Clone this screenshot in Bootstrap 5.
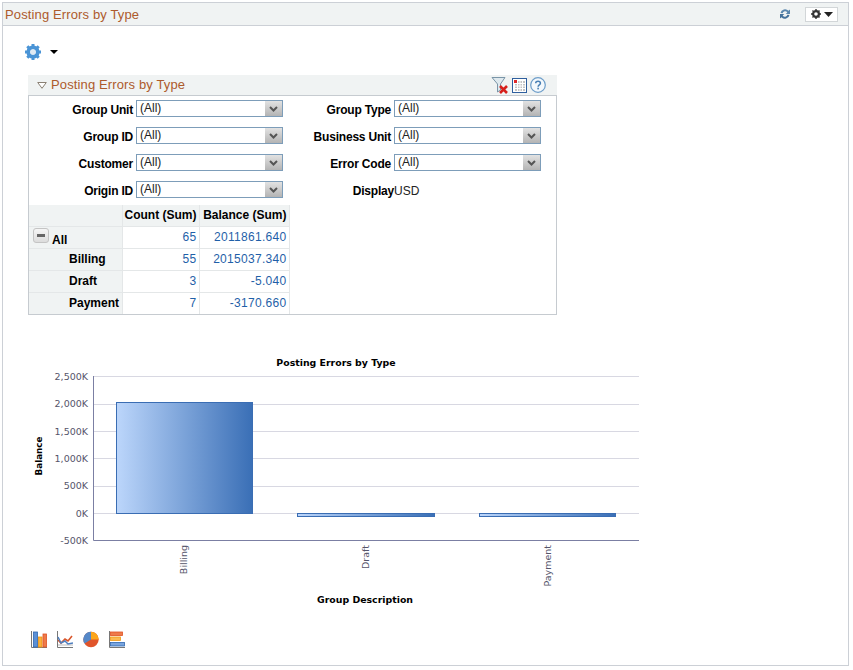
<!DOCTYPE html>
<html lang="en">
<head>
<meta charset="utf-8">
<title>Posting Errors by Type</title>
<link href="https://cdn.jsdelivr.net/npm/bootstrap@5.3.0/dist/css/bootstrap.min.css" rel="stylesheet">
<style>
html,body{background:#fff;margin:0;font-family:"Liberation Sans",Arial,sans-serif;font-size:12px;color:#000}
.portlet{margin:2px 4px 0 2px;height:664px;border:1px solid #ccd0d6;overflow:hidden}
.portlet-head{height:23px;background:#f0f3f3;border-bottom:1px solid #ccd0d6;padding:0 10px 0 2px}
.brown-title{color:#ad5a2c;font-size:13px;letter-spacing:.13px;line-height:1}
.tool-btn{width:33px;height:15px;background:#fff;border:1px solid #d2d6d8;margin-left:14px}
.gear-row{height:26px;padding:13px 0 0 22px;box-sizing:content-box}
.caret-down{width:0;height:0;border-left:4px solid transparent;border-right:4px solid transparent;border-top:4px solid #000;margin-left:9px}
.filter-panel{margin:10px 0 0 25px;width:529px}
.filter-head{height:20px;background:#f0f3f3;padding:0 11px 0 9px}
.filter-head .brown-title{margin-left:1px;margin-bottom:2px}
.filter-body{border:1px solid #c6cbd0;height:220px}
.filter-grid{display:grid;grid-template-columns:104px 147px 105px 147px;column-gap:3px;row-gap:10px;padding-top:4px;align-items:center}
.filter-grid label{font-weight:700;text-align:right;line-height:17px;font-size:12px;letter-spacing:-.2px;padding-top:2px;margin-bottom:-2px}
.filter-grid label.snug{margin-right:-3px}
.pick{appearance:none;-webkit-appearance:none;display:block;width:147px;height:17px;padding:0 0 0 3px;border:1px solid #7d9db9;border-radius:0;background-color:#fff;background-image:url("data:image/svg+xml,%3Csvg xmlns='http://www.w3.org/2000/svg' width='17' height='15'%3E%3Cdefs%3E%3ClinearGradient id='g' x1='0' y1='0' x2='0' y2='1'%3E%3Cstop offset='0' stop-color='%23e2e2e2'/%3E%3Cstop offset='1' stop-color='%23b4b4b4'/%3E%3C/linearGradient%3E%3C/defs%3E%3Crect width='17' height='15' fill='url(%23g)'/%3E%3Cpath d='M5 6l3.500 3.500L12 6' fill='none' stroke='%23555' stroke-width='2'/%3E%3C/svg%3E");background-repeat:no-repeat;background-position:right center;font:12px/15px "Liberation Sans",Arial,sans-serif;color:#222}
.plain-val{line-height:17px;color:#222;padding-top:2px;margin-bottom:-2px}
.pivot{border-collapse:collapse;margin-top:7px;width:260px;table-layout:fixed;font-size:12px}
.pivot th,.pivot td{padding:0 2px;border:1px solid #e4e7e8;height:22px;line-height:14px}
.pivot tr:first-child th{border-top:0;height:21px}
.pivot th:first-child{border-left:0}
.pivot tr:last-child th,.pivot tr:last-child td{border-bottom:0}
.pivot th{background:#f0f3f3;font-weight:700;color:#000}
.pivot th.hc{text-align:right;padding-right:2px;white-space:nowrap}
.pivot th.rowh{padding-left:40px}
.pivot td{text-align:right;color:#1f5fa8;letter-spacing:.3px}
.pivot th.allh{padding-left:4px}
.minus-btn{display:inline-block;width:16px;height:15px;background:linear-gradient(#f6f6f6,#dcdcdc);border:1px solid #c4c4c4;border-radius:3px;vertical-align:1px;margin-right:3px;padding:5px 3px 0}
.minus-btn span{display:block;height:3px;background:#666}
.chart-svg{display:block;margin-top:35px;margin-left:17px}
.chart-svg text{font-family:"DejaVu Sans",sans-serif}
.ticks{font-size:9.500px;fill:#55556a}
.chart-types{padding-left:28px;margin-top:21px;gap:10px}
</style>
</head>
<body>
<div class="portlet">
  <div class="portlet-head d-flex align-items-center justify-content-between">
    <span class="brown-title">Posting Errors by Type</span>
    <div class="d-flex align-items-center">
      <svg width="12" height="12" viewBox="0 0 12 12"><path d="M1.500 5A4.600 4.600 0 0 1 9.500 2.800L11 1.500V6H6.700L8.300 4.500A2.600 2.600 0 0 0 3.600 5.300Z" fill="#5a86ad"/><path d="M10.500 7A4.600 4.600 0 0 1 2.500 9.200L1 10.500V6H5.300L3.700 7.500A2.600 2.600 0 0 0 8.400 6.700Z" fill="#44719b"/></svg>
      <div class="tool-btn d-flex align-items-center justify-content-center gap-1">
        <svg width="10" height="10" viewBox="0 0 10 10"><circle cx="5" cy="5" r="2.900" fill="none" stroke="#333" stroke-width="2.200"/><path d="M5 0v2M5 8v2M0 5h2M8 5h2M1.500 1.500l1.400 1.400M7.100 7.100l1.400 1.400M8.500 1.500L7.100 2.900M2.900 7.100L1.500 8.500" stroke="#333" stroke-width="1.400"/></svg>
        <svg width="9" height="5" viewBox="0 0 9 5"><path d="M0 0h9L4.500 5Z" fill="#222"/></svg>
      </div>
    </div>
  </div>

  <div class="gear-row d-flex align-items-center">
    <svg width="16" height="16" viewBox="0 0 16 16"><circle cx="8" cy="8" r="4.700" fill="none" stroke="#4a94d6" stroke-width="3.800"/><path d="M8 0v3M8 13v3M0 8h3M13 8h3M2.300 2.300l2.200 2.200M11.500 11.500l2.200 2.200M13.700 2.300l-2.200 2.200M4.500 11.500l-2.200 2.200" stroke="#4a94d6" stroke-width="3"/><circle cx="8" cy="8" r="2.600" fill="#dfeaf4"/></svg>
    <span class="caret-down"></span>
  </div>

  <div class="filter-panel">
    <div class="filter-head d-flex align-items-center">
      <svg width="10" height="7" viewBox="0 0 10 7" class="me-1"><path d="M.7.500h8.600L5 6.300Z" fill="#fff" stroke="#8a8074"/></svg>
      <span class="brown-title flex-grow-1">Posting Errors by Type</span>
      <svg width="18" height="18" viewBox="0 0 18 18"><path d="M1 1.500h13L9.500 8v6L6.500 16V8Z" fill="#dfe9ee" stroke="#7a95a8"/><path d="M9 10l7 7M16 10l-7 7" stroke="#d6201c" stroke-width="2.600"/></svg>
      <svg width="15" height="15" viewBox="0 0 15 15" class="ms-1"><rect x=".5" y=".5" width="14" height="14" fill="#fff" stroke="#2f5f9e"/><path d="M3 3h10v10H3z" fill="#c4c4c4"/><path d="M5.500 3v10M8 3v10M10.500 3v10M3 5.500h10M3 8h10M3 10.500h10" stroke="#fff"/><rect x="2" y="2" width="3" height="3" fill="#e0282a"/></svg>
      <svg width="16" height="16" viewBox="0 0 16 16" class="ms-1"><circle cx="8" cy="8" r="7.300" fill="#f3f8fc" stroke="#6d9dc9" stroke-width="1.200"/><path d="M5.700 6.200C5.700 3.600 10.400 3.600 10.400 6.200C10.400 7.900 8.100 7.900 8.100 9.700" fill="none" stroke="#4a80b5" stroke-width="1.500"/><rect x="7.300" y="10.700" width="1.600" height="1.700" fill="#4a80b5"/></svg>
    </div>
    <div class="filter-body">
      <div class="filter-grid">
        <label for="f1">Group Unit</label>
        <select id="f1" class="pick"><option>(All)</option></select>
        <label for="f2">Group Type</label>
        <select id="f2" class="pick"><option>(All)</option></select>
        <label for="f3">Group ID</label>
        <select id="f3" class="pick"><option>(All)</option></select>
        <label for="f4">Business Unit</label>
        <select id="f4" class="pick"><option>(All)</option></select>
        <label for="f5">Customer</label>
        <select id="f5" class="pick"><option>(All)</option></select>
        <label for="f6">Error Code</label>
        <select id="f6" class="pick"><option>(All)</option></select>
        <label for="f7">Origin ID</label>
        <select id="f7" class="pick"><option>(All)</option></select>
        <label class="snug">Display</label>
        <span class="plain-val">USD</span>
      </div>
      <table class="pivot">
        <colgroup><col style="width:93px"><col style="width:77px"><col style="width:90px"></colgroup>
        <tr><th></th><th class="hc">Count (Sum)</th><th class="hc">Balance (Sum)</th></tr>
        <tr><th class="allh"><span class="minus-btn"><span></span></span>All</th><td>65</td><td>2011861.640</td></tr>
        <tr><th class="rowh">Billing</th><td>55</td><td>2015037.340</td></tr>
        <tr><th class="rowh">Draft</th><td>3</td><td>-5.040</td></tr>
        <tr><th class="rowh">Payment</th><td>7</td><td>-3170.660</td></tr>
      </table>
    </div>
  </div>

  <svg class="chart-svg" width="640" height="260" viewBox="20 350 640 260">
    <defs>
      <linearGradient id="barfill" x1="0" x2="1" y1="0" y2="0"><stop offset="0" stop-color="#bcd6fb"/><stop offset="1" stop-color="#3a6fb6"/></linearGradient>
    </defs>
    <text x="336" y="366" text-anchor="middle" font-size="9.400" font-weight="700" fill="#000">Posting Errors by Type</text>
    <g stroke="#d8d8e2" stroke-width="1">
      <path d="M93 376.500H639M93 404.500H639M93 431.500H639M93 458.500H639M93 486.500H639M93 513.500H639"/>
    </g>
    <path d="M93.500 376V540.500H639" fill="none" stroke="#7b7fa3"/>
    <g class="ticks" text-anchor="end">
      <text x="88" y="380">2,500K</text>
      <text x="88" y="407">2,000K</text>
      <text x="88" y="435">1,500K</text>
      <text x="88" y="462">1,000K</text>
      <text x="88" y="489">500K</text>
      <text x="88" y="517">0K</text>
      <text x="88" y="544">-500K</text>
    </g>
    <rect x="116.500" y="402.500" width="136" height="111" fill="url(#barfill)" stroke="#3a6db3"/>
    <rect x="297.500" y="513.500" width="137" height="3" fill="url(#barfill)" stroke="#3a6db3"/>
    <rect x="479.500" y="513.500" width="136" height="3" fill="url(#barfill)" stroke="#3a6db3"/>
    <text transform="translate(42 456) rotate(-90)" text-anchor="middle" font-size="8.800" font-weight="700" fill="#000">Balance</text>
    <g class="ticks" text-anchor="end">
      <text transform="translate(187 545) rotate(-90)">Billing</text>
      <text transform="translate(369 545) rotate(-90)">Draft</text>
      <text transform="translate(551 545) rotate(-90)">Payment</text>
    </g>
    <text x="365" y="603" text-anchor="middle" font-size="9.400" font-weight="700" fill="#000">Group Description</text>
  </svg>

  <div class="chart-types d-flex">
    <svg width="16" height="17" viewBox="0 0 16 17"><path d="M.5 0V16.500H16" fill="none" stroke="#777"/><rect x="2.500" y="1" width="4" height="15" fill="#5b90d6" stroke="#2f66b0" stroke-width=".8"/><rect x="7.500" y="6" width="3.500" height="10" fill="#fbb03b" stroke="#ec9410" stroke-width=".8"/><rect x="12" y="3" width="3.500" height="13" fill="#ee7a4a" stroke="#de5024" stroke-width=".8"/></svg>
    <svg width="16" height="17" viewBox="0 0 16 17"><path d="M.5 0V16.500H16" fill="none" stroke="#777"/><path d="M1 14h15" stroke="#ddd" stroke-width="2"/><path d="M1 9l3 3 4-4 3 2 4-5" fill="none" stroke="#d9552a" stroke-width="1.600"/><path d="M1 6l3 6 4-2 3 3 5-1" fill="none" stroke="#4f7fbf" stroke-width="1.500"/></svg>
    <svg width="16" height="17" viewBox="0 0 16 17"><circle cx="8" cy="8.500" r="7.700" fill="#e0552b"/><path d="M8 8.500V.8A7.700 7.700 0 0 1 15.700 8.500Z" fill="#fba61c"/><path d="M8 8.500V.8A7.700 7.700 0 0 0 1.500 12.600Z" fill="#5588c8"/></svg>
    <svg width="16" height="17" viewBox="0 0 16 17"><path d="M.5 0V16.500H16" fill="none" stroke="#777"/><rect x="1.500" y="1" width="12" height="3.500" fill="#ee7a4a" stroke="#de5024" stroke-width=".8"/><rect x="1.500" y="6" width="10" height="3.500" fill="#fbb94f" stroke="#f19a14" stroke-width=".8"/><rect x="1.500" y="11.500" width="14" height="3.500" fill="#79a4dd" stroke="#2f66b0" stroke-width=".8"/></svg>
  </div>
</div>
<script src="https://cdn.jsdelivr.net/npm/bootstrap@5.3.0/dist/js/bootstrap.bundle.min.js"></script>
</body>
</html>
